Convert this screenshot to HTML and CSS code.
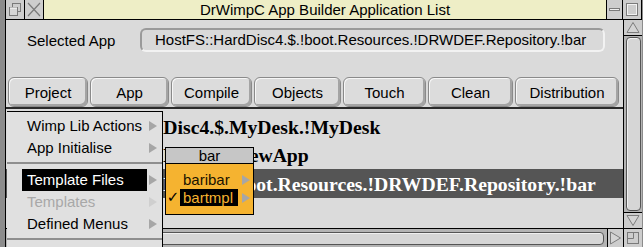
FILE: index.html
```html
<!DOCTYPE html>
<html lang="en">
<head>
  <meta charset="UTF-8" />
  <title>DrWimpC App Builder Application List</title>
  <link rel="stylesheet" href="styles.css">
</head>
<body>
<div class="desk">

  <div class="window">
    <div class="titlebar">
      <span class="tool">
        <svg width="18" height="19" viewBox="0 0 18 19"><rect x="6.5" y="3.5" width="8" height="8" fill="none" stroke="#7a7a7a"/><rect x="3.5" y="7.5" width="8" height="8" fill="#d6d6d6" stroke="#7a7a7a"/><line x1="4" y1="8" x2="11" y2="8" stroke="#fff"/></svg>
      </span>
      <span class="tool">
        <svg width="18" height="19" viewBox="0 0 18 19"><path d="M3 3 L15 16 M15 3 L3 16" stroke="#7a7a7a" stroke-width="1.2"/></svg>
      </span>
      <div class="title">DrWimpC App Builder Application List</div>
      <span class="tool iconise">
        <svg width="15" height="19" viewBox="0 0 15 19"><rect x="2.5" y="8.5" width="10" height="2" fill="#eee" stroke="#7a7a7a"/></svg>
      </span>
      <span class="tool">
        <svg width="18" height="19" viewBox="0 0 18 19"><rect x="3.5" y="3.5" width="11" height="12" fill="none" stroke="#7a7a7a"/><rect x="4.5" y="4.5" width="9" height="10" fill="none" stroke="#f2f2f2"/></svg>
      </span>
    </div>

    <div class="main">
      <div class="pane">
        <div class="toolbar">
          <div class="selected">
            <span class="label">Selected App</span>
            <div class="field">HostFS::HardDisc4.$.!boot.Resources.!DRWDEF.Repository.!bar</div>
          </div>
          <div class="buttons">
            <button class="btn b-project">Project</button>
            <button class="btn b-app">App</button>
            <button class="btn b-compile">Compile</button>
            <button class="btn b-objects">Objects</button>
            <button class="btn b-touch">Touch</button>
            <button class="btn b-clean">Clean</button>
            <button class="btn b-dist">Distribution</button>
          </div>
        </div>
        <div class="list">
          <div class="row">HostFS::HardDisc4.$.MyDesk.!MyDesk</div>
          <div class="row">HostFS::HardDisc4.$.!NewApp</div>
          <div class="row sel">HostFS::HardDisc4.$.!boot.Resources.!DRWDEF.Repository.!bar</div>
        </div>
      </div>

      <div class="vscroll">
        <span class="arrow">
          <svg width="18" height="15" viewBox="0 0 18 15"><path d="M3 12.5 L9 2.5 L15 12.5 Z" fill="#d4d4d4" stroke="#7c7c7c"/></svg>
        </span>
        <div class="well"><div class="sausage"></div></div>
        <span class="arrow down">
          <svg width="18" height="15" viewBox="0 0 18 15"><path d="M3 2.5 L9 12.5 L15 2.5 Z" fill="#d4d4d4" stroke="#7c7c7c"/></svg>
        </span>
      </div>
    </div>

    <div class="bottom">
      <div class="hwell"><div class="hsausage"></div></div>
      <span class="arrow right">
        <svg width="15" height="18" viewBox="0 0 15 18"><path d="M2.5 3 L12.5 9 L2.5 15 Z" fill="#d4d4d4" stroke="#7c7c7c"/></svg>
      </span>
      <span class="resize">
        <svg width="18" height="18" viewBox="0 0 18 18"><rect x="3.5" y="3.5" width="11" height="11" fill="none" stroke="#7a7a7a"/><path d="M3.5 9.5 H9.5 V3.5" fill="none" stroke="#7a7a7a"/></svg>
      </span>
    </div>
  </div>

  <div class="menu">
    <div class="item"><span class="name">Wimp Lib Actions</span><i class="sub"></i></div>
    <div class="item"><span class="name">App Initialise</span><i class="sub"></i></div>
    <div class="sep"></div>
    <div class="item"><span class="name hi">Template Files</span><i class="sub"></i></div>
    <div class="item off"><span class="name">Templates</span><i class="sub"></i></div>
    <div class="item"><span class="name">Defined Menus</span><i class="sub"></i></div>
    <div class="sep"></div>
  </div>

  <div class="submenu">
    <div class="sm-title">bar</div>
    <div class="sm-body">
      <div class="sm-item"><span class="tick"></span><span class="sm-name">baribar</span><i class="sub"></i></div>
      <div class="sm-item"><span class="tick">✓</span><span class="sm-name hi">bartmpl</span><i class="sub"></i></div>
    </div>
  </div>

</div>
</body>
</html>
```

FILE: styles.css
```css
body {
  margin: 0;
  background: #8c8c8c;
  font-family: 'Liberation Sans', Arial, sans-serif;
  font-size: 15px;
  color: #000;
  overflow: hidden;
}
.desk {
  position: relative;
  width: 643px;
  height: 247px;
  overflow: hidden;
}

/* window frame */
.window {
  margin-left: 5px;
  width: 637px;
  height: 247px;
  border-left: 1px solid #000;
  box-sizing: border-box;
  display: flex;
  flex-direction: column;
  background: #dadada;
}
.titlebar {
  display: flex;
  height: 19px;
  border-bottom: 1px solid #000;
  background: #c9c9c9;
}
.tool {
  width: 18px;
  height: 19px;
  border-right: 1px solid #000;
  background: #cdcdcd;
}
.tool svg { display: block; }
.iconise {
  width: 15px;
  border-left: 1px solid #000;
}
.title {
  flex: 1;
  background: #eeeec6;
  text-align: center;
  line-height: 19px;
}

.main {
  display: flex;
  height: 208px;
}
.pane {
  flex: 1;
  display: flex;
  flex-direction: column;
  min-width: 0;
}

/* toolbar */
.toolbar {
  height: 89px;
  padding: 8px 0 0 2px;
  box-sizing: border-box;
  border-bottom: 2px solid #2a2a2a;
  background: #dadada;
}
.selected {
  display: flex;
  align-items: center;
  height: 24px;
}
.label {
  width: 113px;
  padding-left: 19px;
}
.field {
  width: 465px;
  height: 24px;
  box-sizing: border-box;
  padding-left: 13px;
  line-height: 20px;
  border: 2px solid;
  border-color: #9a9a9a #f2f2f2 #f2f2f2 #9a9a9a;
  border-radius: 6px;
  background: #d9d9d9;
  white-space: nowrap;
}
.buttons {
  display: flex;
  gap: 2px;
  margin-top: 25px;
}
.btn {
  height: 30px;
  padding: 0;
  font: inherit;
  color: #000;
  background: #dcdcdc;
  border: 1px solid #8a8a8a;
  border-radius: 6px;
  box-shadow: inset 1px 1px 0 #f6f6f6, inset -2px -2px 0 #a4a4a4;
}
.b-project { width: 80px; }
.b-app { width: 79px; }
.b-compile { width: 81px; }
.b-objects { width: 87px; }
.b-touch { width: 83px; }
.b-clean { width: 85px; }
.b-dist { width: 104px; }

/* file list */
.list {
  flex: 1;
  padding-top: 4px;
  background: #dbdbdb;
  font-family: 'Liberation Serif', 'Times New Roman', serif;
  font-weight: bold;
  font-size: 19.7px;
}
.row {
  height: 28px;
  line-height: 28px;
  padding-left: 37px;
  white-space: nowrap;
}
.row.sel {
  height: 29px;
  line-height: 30px;
  background: #555;
  color: #fff;
}

/* scroll bars */
.vscroll {
  width: 18px;
  border-left: 1px solid #000;
  display: flex;
  flex-direction: column;
  background: #c4c4c4;
}
.arrow {
  display: block;
  height: 15px;
  background: #cdcdcd;
  border-bottom: 1px solid #000;
}
.arrow svg { display: block; }
.arrow.down {
  border-bottom: none;
  border-top: 1px solid #000;
}
.well {
  flex: 1;
  padding: 1px 1px 1px 2px;
  background: #b4b4b4;
}
.sausage {
  height: 100%;
  box-sizing: border-box;
  border: 1px solid #555;
  border-radius: 4px;
  background: #d6d6d6;
  box-shadow: inset 1px 1px 0 #f0f0f0;
}

.bottom {
  display: flex;
  height: 19px;
  border-top: 1px solid #000;
  box-sizing: border-box;
  background: #c4c4c4;
}
.hwell {
  flex: 1;
  padding: 3px 3px 2px 2px;
  background: #b4b4b4;
}
.hsausage {
  height: 100%;
  box-sizing: border-box;
  border: 1px solid #555;
  border-radius: 4px;
  background: #d6d6d6;
  box-shadow: inset 1px 1px 0 #f0f0f0;
}
.arrow.right {
  width: 15px;
  height: 18px;
  border-bottom: none;
  border-left: 1px solid #000;
}
.resize {
  width: 18px;
  border-left: 1px solid #000;
  background: #cdcdcd;
}
.resize svg { display: block; }

/* menu overlays */
.menu {
  position: absolute;
  left: 7px;
  top: 111px;
  width: 156px;
  height: 140px;
  box-sizing: border-box;
  padding: 3px 0 0 15px;
  background: #e0e0e0;
  border-top: 1px solid #000;
  border-right: 1px solid #000;
}
.item {
  display: flex;
  align-items: center;
  height: 22px;
}
.name {
  width: 125px;
  box-sizing: border-box;
  padding-left: 5px;
  line-height: 22px;
}
.name.hi {
  background: #000;
  color: #fff;
}
.item.off .name { color: #a8a8a8; }
.sub {
  width: 0;
  height: 0;
  margin-left: 2px;
  border-left: 8px solid #a6a6a6;
  border-top: 5px solid transparent;
  border-bottom: 5px solid transparent;
}
.item.off .sub { border-left-color: #cfcfcf; }
.sep {
  height: 2px;
  margin: 3px 0 5px -15px;
  background: #8e8e8e;
}

.submenu {
  position: absolute;
  left: 165px;
  top: 147px;
  width: 89px;
}
.sm-title {
  height: 15px;
  line-height: 15px;
  text-align: center;
  background: #c6c6c6;
  border: 1px solid #000;
}
.sm-body {
  height: 51px;
  box-sizing: border-box;
  padding-top: 7px;
  background: #f5b330;
  border: 1px solid #000;
  border-top: none;
}
.sm-item {
  display: flex;
  align-items: center;
  height: 17px;
  margin-bottom: 1px;
}
.tick {
  width: 14px;
  text-align: center;
  font-family: 'DejaVu Sans', sans-serif;
  font-size: 15px;
  line-height: 17px;
}
.sm-name {
  width: 58px;
  box-sizing: border-box;
  padding-left: 3px;
  line-height: 17px;
  color: #1a1200;
}
.sm-name.hi {
  background: #000;
  color: #f5b330;
}
.sm-item .sub { margin-left: 4px; }
```
